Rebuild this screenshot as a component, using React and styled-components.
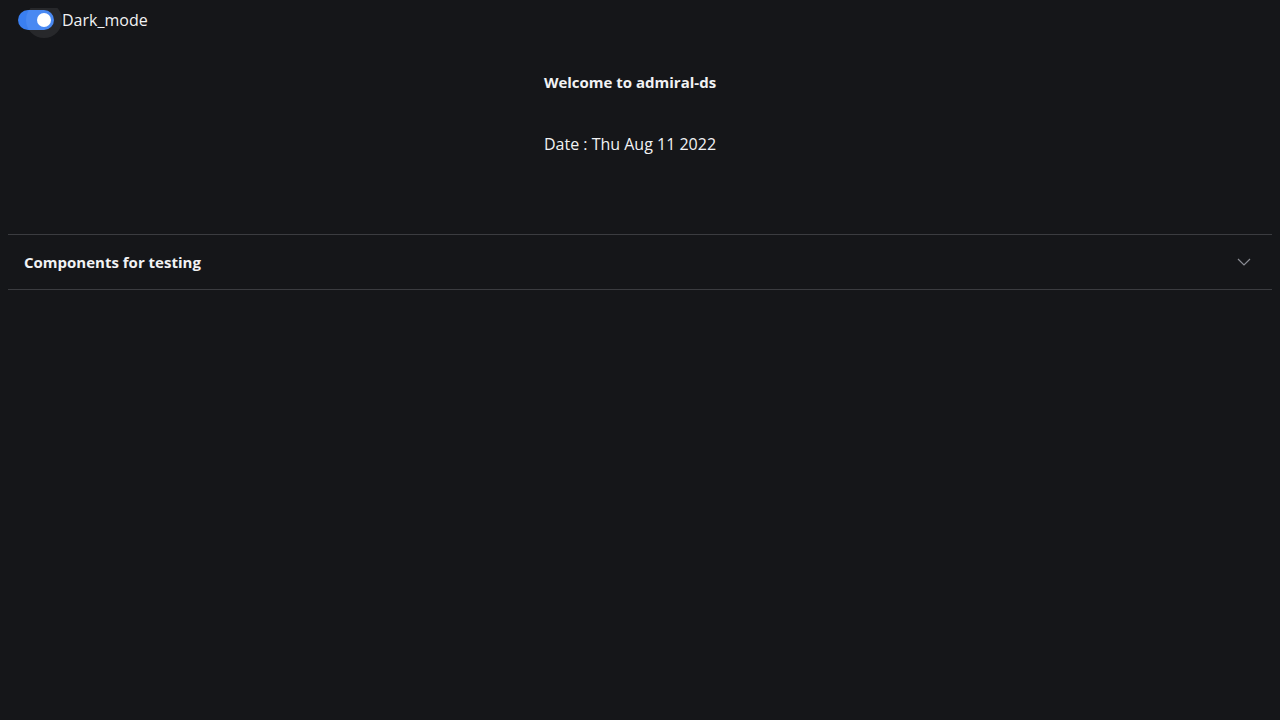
import React, { useState } from "react";
import styled, { createGlobalStyle } from "styled-components";

const Global = createGlobalStyle`
  html, body { background: #151619; }
  body {
    margin: 8px;
    font-family: "Open Sans", "Noto Sans", sans-serif;
    color: #f1f2f4;
  }
`;

const Page = styled.div`
  display: flex;
  flex-direction: column;
`;

const ToggleRow = styled.label`
  display: flex;
  align-items: center;
  gap: 8px;
  height: 24px;
  padding-left: 10px;
  font-size: 16px;
  line-height: 20px;
  cursor: pointer;
`;

const Track = styled.span`
  position: relative;
  width: 36px;
  height: 20px;
  border-radius: 10px;
  background: ${p => (p.$on ? "#3a7ff1" : "#5a5b60")};
  flex: none;
`;

const Halo = styled.span`
  position: absolute;
  top: -8px;
  left: ${p => (p.$on ? "8px" : "-8px")};
  width: 36px;
  height: 36px;
  border-radius: 50%;
  background: rgba(255, 255, 255, 0.08);
`;

const Thumb = styled.span`
  position: absolute;
  top: 3px;
  left: ${p => (p.$on ? "19px" : "3px")};
  width: 14px;
  height: 14px;
  border-radius: 50%;
  background: #ffffff;
`;

const Hero = styled.div`
  display: flex;
  flex-direction: column;
  align-items: center;
  margin-right: 20px;
  padding-top: 38px;
  gap: 38px;
  height: 202px;
  box-sizing: border-box;
`;

const Title = styled.div`
  font-size: 15px;
  font-weight: 700;
  line-height: 24px;
`;

const DateText = styled.div`
  font-size: 16px;
  font-weight: 400;
  line-height: 24px;
`;

const Accordion = styled.div`
  border-top: 1px solid #3b3c40;
  border-bottom: 1px solid #3b3c40;
`;

const AccHeader = styled.div`
  display: flex;
  align-items: center;
  justify-content: space-between;
  height: 54px;
  padding: 0 20px 0 16px;
  font-size: 15px;
  font-weight: 700;
`;

export default function App() {
  const [on, setOn] = useState(true);
  return (
    <>
      <Global />
      <Page>
        <ToggleRow onClick={() => setOn(!on)}>
          <Track $on={on}>
            <Halo $on={on} />
            <Thumb $on={on} />
          </Track>
          Dark_mode
        </ToggleRow>
        <Hero>
          <Title>Welcome to admiral-ds</Title>
          <DateText>Date : Thu Aug 11 2022</DateText>
        </Hero>
        <Accordion>
          <AccHeader>
            Components for testing
            <svg width="16" height="16" viewBox="0 0 16 16" fill="none">
              <path d="M2 5l6 6 6-6" stroke="#8a8c93" strokeWidth="1.2" />
            </svg>
          </AccHeader>
        </Accordion>
      </Page>
    </>
  );
}
